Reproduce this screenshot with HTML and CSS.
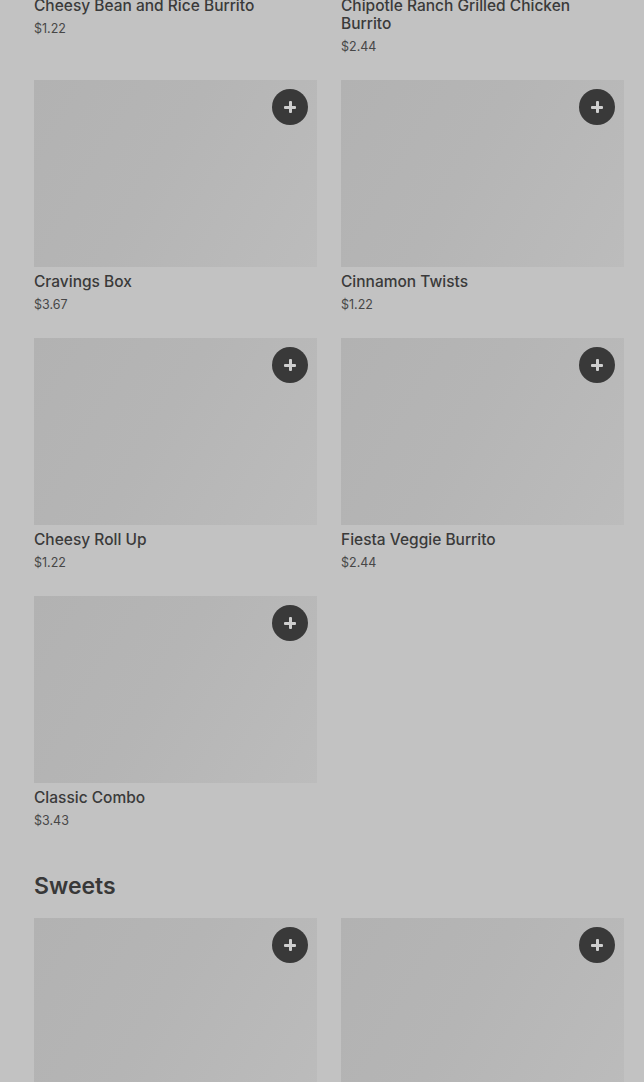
FILE: index.html
```html
<!DOCTYPE html>
<html lang="en">
<head>
<meta charset="utf-8">
<title>Menu</title>
<link rel="stylesheet" href="styles.css">
</head>
<body>
<main class="page">
  <section class="section first">
    <div class="grid">
      <article class="item">
        <div class="thumb"><button class="add" aria-label="Add"><span class="plus"></span></button></div>
        <h3 class="name">Cheesy Bean and Rice Burrito</h3>
        <p class="price">$1.22</p>
      </article>
      <article class="item">
        <div class="thumb"><button class="add" aria-label="Add"><span class="plus"></span></button></div>
        <h3 class="name">Chipotle Ranch Grilled Chicken Burrito</h3>
        <p class="price">$2.44</p>
      </article>
      <article class="item">
        <div class="thumb"><button class="add" aria-label="Add"><span class="plus"></span></button></div>
        <h3 class="name">Cravings Box</h3>
        <p class="price">$3.67</p>
      </article>
      <article class="item">
        <div class="thumb"><button class="add" aria-label="Add"><span class="plus"></span></button></div>
        <h3 class="name">Cinnamon Twists</h3>
        <p class="price">$1.22</p>
      </article>
      <article class="item">
        <div class="thumb"><button class="add" aria-label="Add"><span class="plus"></span></button></div>
        <h3 class="name">Cheesy Roll Up</h3>
        <p class="price">$1.22</p>
      </article>
      <article class="item">
        <div class="thumb"><button class="add" aria-label="Add"><span class="plus"></span></button></div>
        <h3 class="name">Fiesta Veggie Burrito</h3>
        <p class="price">$2.44</p>
      </article>
      <article class="item">
        <div class="thumb"><button class="add" aria-label="Add"><span class="plus"></span></button></div>
        <h3 class="name">Classic Combo</h3>
        <p class="price">$3.43</p>
      </article>
    </div>
  </section>
  <section class="section">
    <h2 class="heading">Sweets</h2>
    <div class="grid">
      <article class="item">
        <div class="thumb"><button class="add" aria-label="Add"><span class="plus"></span></button></div>
        <h3 class="name">Cinnamon Delights</h3>
        <p class="price">$2.44</p>
      </article>
      <article class="item">
        <div class="thumb"><button class="add" aria-label="Add"><span class="plus"></span></button></div>
        <h3 class="name">Churros</h3>
        <p class="price">$1.22</p>
      </article>
    </div>
  </section>
</main>
</body>
</html>
```

FILE: styles.css
```css
html, body {
  margin: 0;
  padding: 0;
  background: #c2c2c2;
  overflow: hidden;
  height: 1082px;
}
body {
  font-family: Inter, "Liberation Sans", sans-serif;
  color: #363636;
}
.page {
  padding: 0 20px 0 34px;
}
.section.first {
  margin-top: -196px;
}
.section + .section {
  margin-top: 39px;
}
.grid {
  display: grid;
  grid-template-columns: 283px 283px;
  column-gap: 24px;
  row-gap: 23px;
  align-items: start;
}
.item {
  display: flex;
  flex-direction: column;
}
.thumb {
  position: relative;
  height: 187px;
  background: linear-gradient(120deg, #b2b2b2 0%, #b5b5b5 45%, #bcbcbc 100%);
}
.add {
  position: absolute;
  top: 9px;
  right: 9px;
  width: 36px;
  height: 36px;
  border: 0;
  padding: 0;
  border-radius: 50%;
  background: #393939;
  display: flex;
  align-items: center;
  justify-content: center;
}
.plus {
  position: relative;
  width: 12px;
  height: 12px;
}
.plus::before,
.plus::after {
  content: "";
  position: absolute;
  background: #cfcfcf;
  border-radius: 1px;
}
.plus::before {
  left: 0;
  top: 5px;
  width: 12px;
  height: 2.5px;
}
.plus::after {
  left: 5px;
  top: 0;
  width: 2.5px;
  height: 12px;
}
.name {
  margin: 6px 0 0;
  font-size: 15.5px;
  line-height: 18px;
  font-weight: 500;
  color: #3a3a3a;
}
.price {
  margin: 4px 0 0;
  font-size: 12.5px;
  line-height: 20px;
  font-weight: 400;
  color: #474747;
}
.heading {
  margin: 0 0 16px;
  font-size: 23px;
  line-height: 32px;
  font-weight: 600;
  color: #383838;
}
```
